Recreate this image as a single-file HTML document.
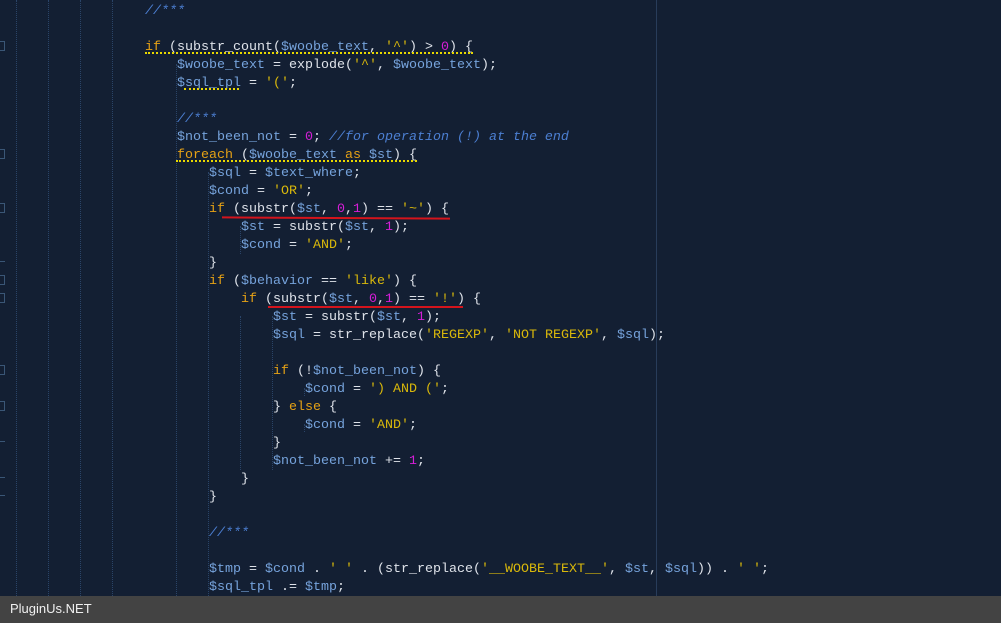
<!DOCTYPE html>
<html><head><meta charset="utf-8"><style>
html,body{margin:0;padding:0}
body{width:1001px;height:623px;background:#131f33;position:relative;overflow:hidden;font-family:"Liberation Mono",monospace;font-size:13.33px}
.r{position:absolute;height:18px;line-height:18px;white-space:pre;color:#dfe3ea;margin-top:2px}
.v{color:#76a3dc}.k{color:#e5a115}.s{color:#d9b80b}.n{color:#d61ed8}.c{color:#4c7fd2;font-style:italic}
.g{position:absolute;top:0;bottom:27px;width:0;border-left:1px dotted #2a4468}
.f{position:absolute;left:-5px;width:8px;height:8px;border:1px solid #3a5676}
.e{position:absolute;left:0;width:5px;height:1px;background:#3a5676}
.w{position:absolute;height:0;border-bottom:2px dotted #e8d800}
.red{position:absolute;height:2px;background:#d4141c}
#foot{position:absolute;left:0;top:596px;width:1001px;height:27px;background:#434343;color:#f0f0f0;font-family:"Liberation Sans",sans-serif;font-size:13px;line-height:25px;padding-left:10px;box-sizing:border-box}
</style></head><body>
<div class="g" style="left:16px"></div><div class="g" style="left:48px"></div><div class="g" style="left:80px"></div><div class="g" style="left:112px"></div>
<div class="g" style="left:176px;top:64px;bottom:27px"></div>
<div class="g" style="left:208px;top:172px;bottom:27px"></div>
<div class="g" style="left:240px;top:226px;height:28px;bottom:auto"></div>
<div class="g" style="left:240px;top:316px;height:154px;bottom:auto"></div>
<div class="g" style="left:272px;top:316px;height:154px;bottom:auto"></div>
<div class="g" style="left:304px;top:388px;height:8px;bottom:auto"></div>
<div class="g" style="left:304px;top:424px;height:8px;bottom:auto"></div>
<div style="position:absolute;left:656px;top:0;bottom:27px;width:1px;background:#283c5a"></div>
<div class="f" style="top:41px"></div><div class="f" style="top:149px"></div><div class="f" style="top:203px"></div><div class="f" style="top:275px"></div><div class="f" style="top:293px"></div><div class="f" style="top:365px"></div><div class="f" style="top:401px"></div>
<div class="e" style="top:261px"></div><div class="e" style="top:441px"></div><div class="e" style="top:477px"></div><div class="e" style="top:495px"></div>

<div class="r" style="top:1px;left:145px"><span class="c">//***</span></div>
<div class="r" style="top:37px;left:145px"><span class="k">if</span> (substr_count(<span class="v">$woobe_text</span>, <span class="s">'^'</span>) &gt; <span class="n">0</span>) {</div>
<div class="r" style="top:55px;left:177px"><span class="v">$woobe_text</span> = explode(<span class="s">'^'</span>, <span class="v">$woobe_text</span>);</div>
<div class="r" style="top:73px;left:177px"><span class="v">$sql_tpl</span> = <span class="s">'('</span>;</div>
<div class="r" style="top:109px;left:177px"><span class="c">//***</span></div>
<div class="r" style="top:127px;left:177px"><span class="v">$not_been_not</span> = <span class="n">0</span>; <span class="c">//for operation (!) at the end</span></div>
<div class="r" style="top:145px;left:177px"><span class="k">foreach</span> (<span class="v">$woobe_text</span> <span class="k">as</span> <span class="v">$st</span>) {</div>
<div class="r" style="top:163px;left:209px"><span class="v">$sql</span> = <span class="v">$text_where</span>;</div>
<div class="r" style="top:181px;left:209px"><span class="v">$cond</span> = <span class="s">'OR'</span>;</div>
<div class="r" style="top:199px;left:209px"><span class="k">if</span> (substr(<span class="v">$st</span>, <span class="n">0</span>,<span class="n">1</span>) == <span class="s">'~'</span>) {</div>
<div class="r" style="top:217px;left:241px"><span class="v">$st</span> = substr(<span class="v">$st</span>, <span class="n">1</span>);</div>
<div class="r" style="top:235px;left:241px"><span class="v">$cond</span> = <span class="s">'AND'</span>;</div>
<div class="r" style="top:253px;left:209px">}</div>
<div class="r" style="top:271px;left:209px"><span class="k">if</span> (<span class="v">$behavior</span> == <span class="s">'like'</span>) {</div>
<div class="r" style="top:289px;left:241px"><span class="k">if</span> (substr(<span class="v">$st</span>, <span class="n">0</span>,<span class="n">1</span>) == <span class="s">'!'</span>) {</div>
<div class="r" style="top:307px;left:273px"><span class="v">$st</span> = substr(<span class="v">$st</span>, <span class="n">1</span>);</div>
<div class="r" style="top:325px;left:273px"><span class="v">$sql</span> = str_replace(<span class="s">'REGEXP'</span>, <span class="s">'NOT REGEXP'</span>, <span class="v">$sql</span>);</div>
<div class="r" style="top:361px;left:273px"><span class="k">if</span> (!<span class="v">$not_been_not</span>) {</div>
<div class="r" style="top:379px;left:305px"><span class="v">$cond</span> = <span class="s">') AND ('</span>;</div>
<div class="r" style="top:397px;left:273px">} <span class="k">else</span> {</div>
<div class="r" style="top:415px;left:305px"><span class="v">$cond</span> = <span class="s">'AND'</span>;</div>
<div class="r" style="top:433px;left:273px">}</div>
<div class="r" style="top:451px;left:273px"><span class="v">$not_been_not</span> += <span class="n">1</span>;</div>
<div class="r" style="top:469px;left:241px">}</div>
<div class="r" style="top:487px;left:209px">}</div>
<div class="r" style="top:523px;left:209px"><span class="c">//***</span></div>
<div class="r" style="top:559px;left:209px"><span class="v">$tmp</span> = <span class="v">$cond</span> . <span class="s">' '</span> . (str_replace(<span class="s">'__WOOBE_TEXT__'</span>, <span class="v">$st</span>, <span class="v">$sql</span>)) . <span class="s">' '</span>;</div>
<div class="r" style="top:577px;left:209px"><span class="v">$sql_tpl</span> .= <span class="v">$tmp</span>;</div>

<div class="w" style="left:145px;top:52px;width:328px"></div>
<div class="w" style="left:184px;top:88px;width:55px"></div>
<div class="w" style="left:176px;top:160px;width:241px"></div>
<div class="red" style="left:222px;top:217px;width:228px;transform:rotate(0.3deg)"></div>
<div class="red" style="left:268px;top:306px;width:195px"></div>
<div id="foot">PluginUs.NET</div>
</body></html>
